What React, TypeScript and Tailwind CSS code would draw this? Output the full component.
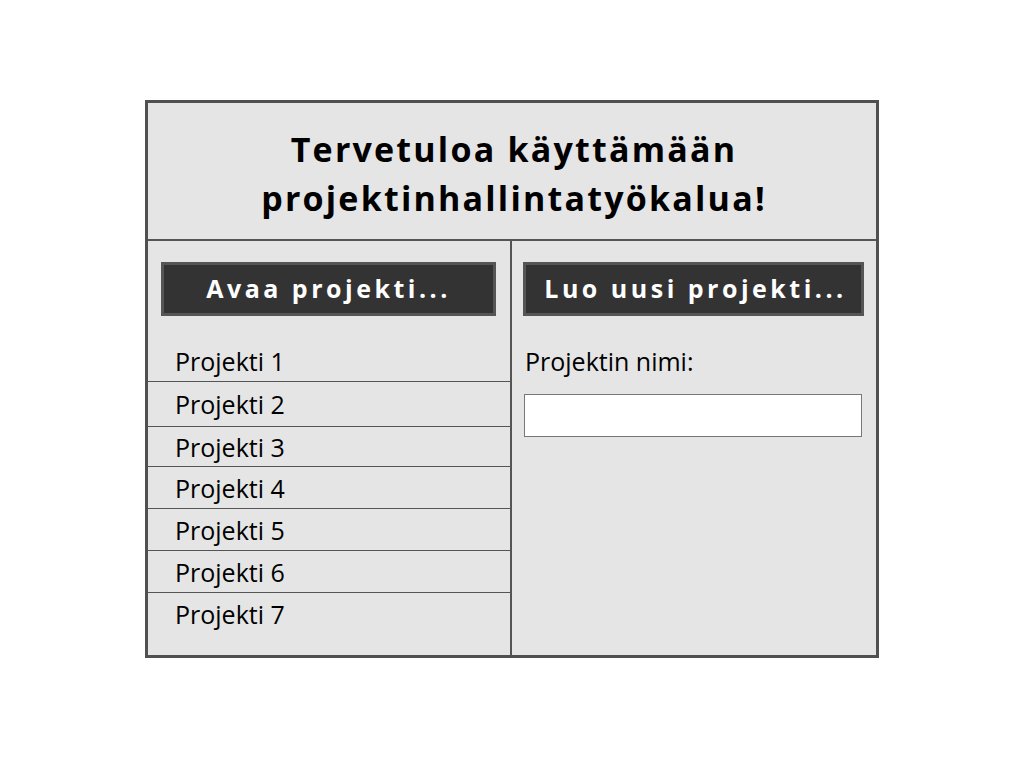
import React from 'react'

const projects = [
  { name: 'Projekti 1', h: 'h-[42px]' },
  { name: 'Projekti 2', h: 'h-[45px]' },
  { name: 'Projekti 3', h: 'h-[40px]' },
  { name: 'Projekti 4', h: 'h-[42px]' },
  { name: 'Projekti 5', h: 'h-[42px]' },
  { name: 'Projekti 6', h: 'h-[42px]' },
  { name: 'Projekti 7', h: 'h-[42px]' },
]

export default function App() {
  return (
    <div className="min-h-screen bg-white pt-[100px] font-['Open_Sans',sans-serif] text-black">
      <div className="ml-[145px] flex h-[558px] w-[734px] flex-col border-[3px] border-[#505050] bg-[#e5e5e5]">
        {/* Header */}
        <div className="flex h-[138px] flex-col items-center justify-center border-b-2 border-[#555] pt-[6px] pl-[4px] text-center">
          <h1 className="text-[34px] font-bold leading-[49px] tracking-[2.2px]">
            Tervetuloa käyttämään
            <br />
            projektinhallintatyökalua!
          </h1>
        </div>

        <div className="flex flex-1">
          {/* Open project */}
          <div className="flex w-[364px] flex-col border-r-2 border-[#555]">
            <div className="px-[13px] pt-[21px] pr-[14px]">
              <button className="flex h-[54px] w-full items-center justify-center border-[3px] border-[#555] bg-[#333] text-[25px] font-bold tracking-[3.5px] text-white">
                Avaa projekti...
              </button>
            </div>
            <ul className="mt-[24px]">
              {projects.map((p, i) => (
                <li
                  key={p.name}
                  className={`flex items-center pl-[27px] text-[25px] ${p.h} ${
                    i < projects.length - 1 ? 'border-b border-[#555]' : ''
                  }`}
                >
                  <span className="pt-[2px]">{p.name}</span>
                </li>
              ))}
            </ul>
          </div>

          {/* New project */}
          <div className="flex flex-1 flex-col px-[11px] pt-[21px]">
            <button className="flex h-[54px] w-[341px] items-center justify-center border-[3px] border-[#555] bg-[#333] pl-1 text-[25px] font-bold tracking-[3.5px] text-white">
              Luo uusi projekti...
            </button>
            <label className="mt-[28px] pl-[2px] text-[25px] leading-[34px]">Projektin nimi:</label>
            <input
              type="text"
              className="mt-[16px] ml-[1px] h-[43px] w-[338px] border border-[#777] bg-white px-2 outline-none"
            />
          </div>
        </div>
      </div>
    </div>
  )
}
